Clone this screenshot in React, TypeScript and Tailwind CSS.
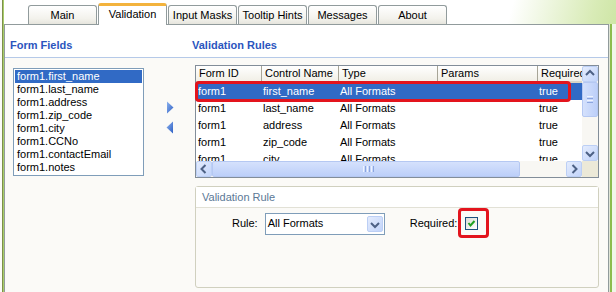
import React from "react";

const TABS = ["Main", "Validation", "Input Masks", "Tooltip Hints", "Messages", "About"];

const FIELDS = [
  "form1.first_name",
  "form1.last_name",
  "form1.address",
  "form1.zip_code",
  "form1.city",
  "form1.CCNo",
  "form1.contactEmail",
  "form1.notes",
];

const ROWS = ["first_name", "last_name", "address", "zip_code", "city"];

const COLS = [
  { title: "Form ID", w: "w-[66px]" },
  { title: "Control Name", w: "w-[77px]" },
  { title: "Type", w: "w-[99px]" },
  { title: "Params", w: "w-[100px]" },
];

const Arrow = ({ dir }: { dir: "left" | "right" }) => (
  <svg width="8" height="13" viewBox="0 0 8 13">
    <defs>
      <linearGradient id={`g-${dir}`} x1="0" y1="0" x2="1" y2="1">
        <stop offset="0" stopColor="#8db2ee" />
        <stop offset="1" stopColor="#2d5fc4" />
      </linearGradient>
    </defs>
    {dir === "right" ? (
      <path d="M1 0.5 L7.5 6.5 L1 12.5 Z" fill={`url(#g-${dir})`} />
    ) : (
      <path d="M7 0.5 L0.5 6.5 L7 12.5 Z" fill={`url(#g-${dir})`} />
    )}
  </svg>
);

const ScrollBtn = ({ dir }: { dir: "up" | "down" | "left" | "right" }) => {
  const d = {
    up: "M4 9 L8 5 L12 9",
    down: "M4 7 L8 11 L12 7",
    left: "M9.5 4 L5.5 8 L9.5 12",
    right: "M6.5 4 L10.5 8 L6.5 12",
  }[dir];
  return (
    <div className="w-[16px] h-[16px] shrink-0 rounded-[2px] border border-[#bccff5] bg-[linear-gradient(135deg,#e4ecfd,#c2d4fa)]">
      <svg width="14" height="14" viewBox="1 1 14 14">
        <path d={d} fill="none" stroke="#4d6185" strokeWidth="2" />
      </svg>
    </div>
  );
};

export default function App() {
  return (
    <div className="flex w-[616px] h-[292px] overflow-hidden bg-[linear-gradient(105deg,#ffffff_0%,#ffffff_74%,#d8ebb6_86%,#b2d678_100%)] font-['Liberation_Sans',Arial,sans-serif] text-[11px] leading-[13px] text-black">
      <div className="w-[4px] shrink-0 bg-[linear-gradient(to_right,#fbfbf8_0px_2px,#7d8f4b_2px_3px,#a8cd69_3px_4px)]" />

      <div className="flex flex-col w-[605px] shrink-0">
        {/* tabs */}
        <div className="flex items-end gap-px h-[24px] pl-[24px]">
          {TABS.map((t) =>
            t === "Validation" ? (
              <div
                key={t}
                className="relative z-10 -mb-px w-[69px] h-[22px] rounded-t-[3px] border border-b-0 border-[#919b9c] border-t-[3px] border-t-[#f3b33d] bg-white text-center leading-[16px]"
              >
                {t}
              </div>
            ) : (
              <div
                key={t}
                className="w-[69px] h-[19px] rounded-t-[3px] border border-b-0 border-[#919b9c] bg-[linear-gradient(#ffffff,#f3f2ec_70%,#e6e5dd)] text-center leading-[18px]"
              >
                {t}
              </div>
            )
          )}
        </div>

        {/* pane */}
        <div className="flex-1 flex flex-col border border-b-0 border-[#919b9c] bg-[#fbfaf7]">
          <div className="flex h-[33px] shrink-0 pt-[14px] bg-white border-b border-[#b5c9e8] font-bold text-[#2b55be]">
            <div className="w-[187px] pl-[5px]">Form Fields</div>
            <div>Validation Rules</div>
          </div>

          <div className="flex flex-1">
            {/* left: field list + arrows */}
            <div className="flex w-[190px] shrink-0 pl-[8px] pt-[10px]">
              <div className="w-[131px] h-[108px] border border-[#7f9db9] bg-white p-px">
                {FIELDS.map((f, i) => (
                  <div
                    key={f}
                    className={`h-[13px] pl-[2px] leading-[13px] ${i === 0 ? "bg-[#316ac5] text-white" : ""}`}
                  >
                    {f}
                  </div>
                ))}
              </div>
              <div className="flex flex-col pl-[22px] pt-[33px] gap-[7px]">
                <div>
                  <Arrow dir="right" />
                </div>
                <Arrow dir="left" />
              </div>
            </div>

            {/* right: grid + group box */}
            <div className="flex flex-col w-[404px] shrink-0 pt-[7px]">
              <div className="relative flex h-[113px] border border-[#828d99] bg-white">
                <div className="flex flex-col w-[386px] overflow-hidden">
                  <div className="flex h-[17px] shrink-0 border-b-2 border-[#d8d5c6] bg-[linear-gradient(#ffffff,#f1efe6)] leading-[15px]">
                    {COLS.map((c) => (
                      <div key={c.title} className={`${c.w} shrink-0 pl-[3px] border-r border-[#a7a597]`}>
                        {c.title}
                      </div>
                    ))}
                    <div className="flex-1 pl-[3px] whitespace-nowrap overflow-hidden">Required</div>
                  </div>
                  <div className="h-[78px] overflow-hidden">
                    {ROWS.map((r, i) => (
                      <div
                        key={r}
                        className={`flex h-[17px] leading-[17px] ${i === 0 ? "bg-[#316ac5] text-white" : ""}`}
                      >
                        <div className="w-[66px] shrink-0 pl-[2px]">form1</div>
                        <div className="w-[77px] shrink-0 pl-[1px]">{r}</div>
                        <div className="w-[99px] shrink-0 pl-[1px]">All Formats</div>
                        <div className="w-[100px] shrink-0" />
                        <div className="flex-1 pl-[1px]">true</div>
                      </div>
                    ))}
                  </div>
                  <div className="flex h-[16px] shrink-0 bg-[#f8f7f3]">
                    <ScrollBtn dir="left" />
                    <div className="relative w-[308px] h-[16px] rounded-[2px] border border-[#b5c8f2] bg-[linear-gradient(#d5e1fc,#bccff9)]">
                      <div className="absolute left-[150px] top-[4px] flex gap-px">
                        <div className="w-px h-[6px] bg-[#eef3fe]" />
                        <div className="w-px h-[6px] bg-[#8ca6e0]" />
                        <div className="w-px h-[6px] bg-[#eef3fe]" />
                        <div className="w-px h-[6px] bg-[#8ca6e0]" />
                        <div className="w-px h-[6px] bg-[#eef3fe]" />
                        <div className="w-px h-[6px] bg-[#8ca6e0]" />
                      </div>
                    </div>
                    <div className="flex-1" />
                    <ScrollBtn dir="right" />
                  </div>
                </div>
                <div className="flex flex-col w-[16px] shrink-0">
                  <div className="flex flex-col h-[95px] bg-[#f8f7f3]">
                    <ScrollBtn dir="up" />
                    <div className="relative h-[35px] rounded-[2px] border border-[#b5c8f2] bg-[linear-gradient(to_right,#d5e1fc,#bccff9)]">
                      <div className="absolute left-[4px] top-[13px] flex flex-col gap-px">
                        <div className="w-[6px] h-px bg-[#eef3fe]" />
                        <div className="w-[6px] h-px bg-[#8ca6e0]" />
                        <div className="w-[6px] h-px bg-[#eef3fe]" />
                        <div className="w-[6px] h-px bg-[#8ca6e0]" />
                      </div>
                    </div>
                    <div className="flex-1" />
                    <ScrollBtn dir="down" />
                  </div>
                  <div className="flex-1 bg-[#ece9d8]" />
                </div>
                <div className="absolute left-[-1px] top-[15px] w-[376px] h-[21px] rounded-[4px] border-[3px] border-[#e3141d]" />
              </div>

              <div className="mt-[8px] flex flex-col h-[102px] rounded-[3px] border border-[#d0d0bf]">
                <div className="h-[21px] shrink-0 pl-[6px] leading-[21px] bg-white border-b border-[#e2e1d6] text-[#5b7896]">
                  Validation Rule
                </div>
                <div className="flex items-center pt-[4px] pl-[36px] h-[27px]">
                  <span>Rule:</span>
                  <div className="ml-[7px] flex items-center justify-between w-[120px] h-[22px] border border-[#7f9db9] bg-white pl-[2px] pr-px">
                    <span>All Formats</span>
                    <ScrollBtn dir="down" />
                  </div>
                  <span className="ml-[25px]">Required:</span>
                  <div className="relative ml-[8px] w-[13px] h-[13px] border border-[#1c5180] bg-[linear-gradient(135deg,#dcdcd5,#ffffff)]">
                    <svg width="11" height="11" viewBox="0 0 11 11" className="block">
                      <path d="M2.5 5 L4.5 7.5 L8.5 3" fill="none" stroke="#21a121" strokeWidth="2" />
                    </svg>
                    <div className="absolute left-[-8px] top-[-10px] w-[31px] h-[30px] rounded-[4px] border-[3px] border-[#e3141d]" />
                  </div>
                </div>
              </div>
            </div>
          </div>
        </div>
      </div>

      <div className="flex flex-col w-[7px] shrink-0">
        <div className="h-[24px] shrink-0" />
        <div className="flex-1 bg-[linear-gradient(to_right,#dfe4d6_0px_1px,#8cbc4c_1px_3px,#f1f6e8_3px_7px)]" />
      </div>
    </div>
  );
}
